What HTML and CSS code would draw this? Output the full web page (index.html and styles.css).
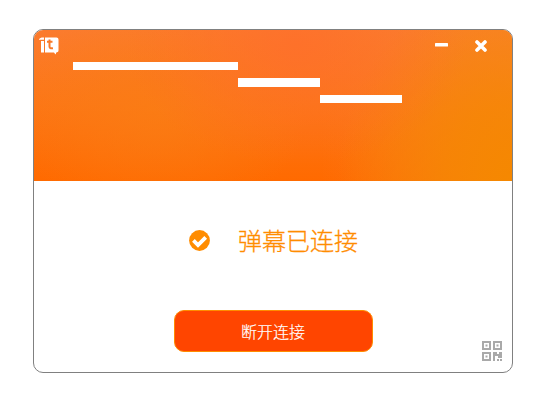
FILE: index.html
```html
<!DOCTYPE html>
<html lang="zh-CN">
<head>
<meta charset="utf-8">
<title>弹幕</title>
<link rel="stylesheet" href="styles.css">
</head>
<body>
<main class="window">
  <header class="banner">
    <div class="titlebar">
      <svg class="logo" viewBox="0 0 20 18" width="20" height="18">
        <path class="solid" d="M0 2.200C1 .8 2 .4 5 .5V2.800H0zM2 4H5V15.500H2zM6 .5H17.500Q19.500 .5 19.500 2.500V13.500Q19.500 15 18 15.300H17.500L16.500 17.500L15 15.600H6z"/>
        <path class="mark" d="M10.500 2.500V9.500Q10.500 11.800 14 11.200M8 4.800H13.500"/>
      </svg>
      <div class="controls">
        <svg class="minimize" viewBox="0 0 13 4" width="13" height="4"><rect width="13" height="3.500" rx=".6"/></svg>
        <svg class="close" viewBox="0 0 12 12" width="12" height="12"><path d="M2 2L10 10M10 2L2 10"/></svg>
      </div>
    </div>
    <div class="bars">
      <span class="bar long"></span>
      <span class="bar middle"></span>
      <span class="bar last"></span>
    </div>
  </header>
  <section class="content">
    <div class="status">
      <svg class="check" viewBox="0 0 21 21" width="21" height="21"><circle cx="10.500" cy="10.500" r="10.400"/><path d="M4.400 10.400L9 15L16.700 7.300"/></svg>
      <span class="status-text">弹幕已连接</span>
    </div>
    <button class="disconnect">断开连接</button>
    <svg class="qr" viewBox="0 0 20 20" width="20" height="20">
      <path class="frame" d="M1 1H8V8H1zM12 1H19V8H12zM1 12H8V19H1z"/>
      <path class="dots" d="M3.500 3.500h2v2h-2zM14.500 3.500h2v2h-2zM3.500 14.500h2v2h-2zM11 11h4v2h2v-2h3v6h-4v-2h-3v5h-2zM15 18h2v2h-2zM18 18h2v2h-2z"/>
    </svg>
  </section>
</main>
</body>
</html>
```
FILE: styles.css
```css
* { box-sizing: border-box; }
body {
  margin: 0;
  padding: 29px 0 0 33px;
  background: #fff;
  font-family: "Noto Sans CJK SC", sans-serif;
}
.window {
  width: 480px;
  height: 344px;
  border: 1px solid #808080;
  border-radius: 10px;
  overflow: hidden;
  background: #fff;
}
.banner {
  height: 151px;
  background:
    radial-gradient(ellipse 170px 120px at 262px 15px, rgba(255, 110, 42, .75), rgba(255, 110, 42, 0)),
    radial-gradient(ellipse 175px 200px at 100% 100%, #f58800 0%, rgba(245, 136, 0, .75) 38%, rgba(245, 136, 0, 0) 100%),
    radial-gradient(ellipse 150px 110px at 125px 80px, rgba(250, 126, 20, .7), rgba(250, 126, 20, 0)),
    linear-gradient(90deg, rgba(248, 132, 44, 0) 60%, rgba(248, 132, 44, .7) 100%),
    linear-gradient(180deg, #fb7b2e 0%, #fc7616 50%, #ff6a00 100%);
}
.titlebar {
  display: flex;
  justify-content: space-between;
  height: 32px;
  padding: 7px 25px 0 5px;
}
.controls {
  display: flex;
  gap: 27px;
  padding-top: 3px;
}
.minimize { margin-top: 3px; fill: #fff; }
.close { fill: none; stroke: #fff; stroke-width: 3.6; stroke-linecap: round; }
.solid { fill: #fff; }
.mark { fill: none; stroke: #f97a28; stroke-width: 2; }
.bars {
  display: grid;
  grid-template-columns: 165px 82px 82px;
  grid-template-rows: 8px 9px 8px;
  row-gap: 8px;
  padding-left: 39px;
}
.bar { background: #fff; }
.long { grid-area: 1 / 1; }
.middle { grid-area: 2 / 2; }
.last { grid-area: 3 / 3; }
.content {
  display: flex;
  flex-direction: column;
  height: 191px;
  padding: 42px 10px 0 140px;
}
.status {
  display: flex;
  align-items: center;
  gap: 28px;
  height: 34px;
  margin-left: 15px;
}
.check { fill: #ff8c00; }
.check path { fill: none; stroke: #fff; stroke-width: 3.800; }
.status-text {
  color: #ff8c00;
  font-size: 24px;
  font-weight: 300;
  line-height: 34px;
  -webkit-text-stroke: .3px #ff8c00;
}
.disconnect {
  width: 199px;
  height: 42px;
  margin-top: 53px;
  padding: 0 1px 1px 0;
  border: 1px solid #ff8c00;
  border-radius: 10px;
  background: #ff4500;
  color: #fff;
  font: 300 16px/38px "Noto Sans CJK SC", sans-serif;
  -webkit-text-stroke: .2px #fff;
}
.qr { align-self: flex-end; margin-top: -11px; }
.frame { fill: none; stroke: #a9a9a9; stroke-width: 2; }
.dots { fill: #a9a9a9; }
```
